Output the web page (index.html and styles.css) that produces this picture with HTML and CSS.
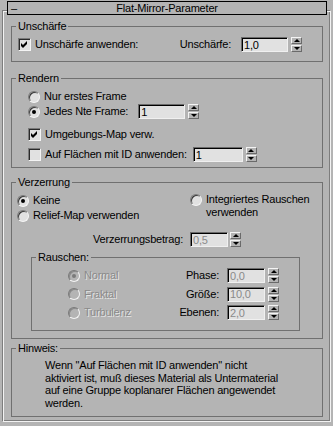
FILE: index.html
```html
<!DOCTYPE html>
<html lang="de">
<head>
    <meta charset="UTF-8">
    <title>Flat-Mirror-Parameter</title>
    <link rel="stylesheet" href="styles.css">
</head>
<body>
    <div class="title">
        <span class="minus">–</span>
        <span class="title-text">Flat-Mirror-Parameter</span>
    </div>

    <div class="frame">
        <fieldset class="group g-blur">
            <legend>Unschärfe</legend>
            <div class="row">
                <span class="box"><svg width="9" height="9" viewBox="0 0 9 9"><polygon points="1,3 3,5 7,1 7,4 3,8 1,6" fill="#000"/></svg></span>
                <span class="txt">Unschärfe anwenden:</span>
                <span class="lbl push">Unschärfe:</span>
                <input class="field w47" value="1,0" readonly>
                <span class="spin"><i class="up"></i><i class="dn"></i></span>
            </div>
        </fieldset>

        <fieldset class="group g-render">
            <legend>Rendern</legend>
            <div class="row ind">
                <span class="radio"></span>
                <span class="txt">Nur erstes Frame</span>
            </div>
            <div class="row ind">
                <span class="radio sel"></span>
                <span class="txt">Jedes Nte Frame:</span>
                <input class="field w47 ml10" value="1" readonly>
                <span class="spin"><i class="up"></i><i class="dn"></i></span>
            </div>
            <div class="row ind r3">
                <span class="box"><svg width="9" height="9" viewBox="0 0 9 9"><polygon points="1,3 3,5 7,1 7,4 3,8 1,6" fill="#000"/></svg></span>
                <span class="txt">Umgebungs-Map verw.</span>
            </div>
            <div class="row ind r4">
                <span class="box"></span>
                <span class="txt">Auf Flächen mit ID anwenden:</span>
                <input class="field w50 ml6" value="1" readonly>
                <span class="spin"><i class="up"></i><i class="dn"></i></span>
            </div>
        </fieldset>

        <fieldset class="group g-warp">
            <legend>Verzerrung</legend>
            <div class="choices">
                <div class="col-left">
                    <div class="row">
                        <span class="radio sel"></span>
                        <span class="txt">Keine</span>
                    </div>
                    <div class="row">
                        <span class="radio"></span>
                        <span class="txt">Relief-Map verwenden</span>
                    </div>
                </div>
                <div class="col-right">
                    <span class="radio"></span>
                    <span class="txt two">Integriertes Rauschen<br>verwenden</span>
                </div>
            </div>
            <div class="row amount">
                <span class="lbl amount-lbl">Verzerrungsbetrag:</span>
                <input class="field w38 ml7" value="0,5" disabled>
                <span class="spin ml2"><i class="up"></i><i class="dn"></i></span>
            </div>

            <fieldset class="group g-noise">
                <legend>Rauschen:</legend>
                <div class="noise-rows">
                    <div class="row">
                        <span class="noise-opt"><span class="radio off sel"></span><span class="txt dim">Normal</span></span>
                        <span class="lbl noise-lbl">Phase:</span>
                        <input class="field w38 ml8" value="0,0" disabled>
                        <span class="spin"><i class="up"></i><i class="dn"></i></span>
                    </div>
                    <div class="row">
                        <span class="noise-opt"><span class="radio off"></span><span class="txt dim">Fraktal</span></span>
                        <span class="lbl noise-lbl">Größe:</span>
                        <input class="field w38 ml8" value="10,0" disabled>
                        <span class="spin"><i class="up"></i><i class="dn"></i></span>
                    </div>
                    <div class="row">
                        <span class="noise-opt"><span class="radio off"></span><span class="txt dim">Turbulenz</span></span>
                        <span class="lbl noise-lbl">Ebenen:</span>
                        <input class="field w38 ml8" value="2,0" disabled>
                        <span class="spin"><i class="up"></i><i class="dn"></i></span>
                    </div>
                </div>
            </fieldset>
        </fieldset>

        <fieldset class="group g-note">
            <legend>Hinweis:</legend>
            <p class="note">Wenn "Auf Flächen mit ID anwenden" nicht<br>aktiviert ist, muß dieses Material als Untermaterial<br>auf eine Gruppe koplanarer Flächen angewendet<br>werden.</p>
        </fieldset>
    </div>
</body>
</html>
```

FILE: styles.css
```css
* { box-sizing: border-box; }
body {
    margin: 0; padding-top: 1px; width: 333px; height: 426px; overflow: hidden;
    background: #b4b4b4; color: #000;
    font: 11px "Liberation Sans", Arial, sans-serif; letter-spacing: -0.2px;
}

/* rollout title */
.title {
    position: relative; z-index: 1;
    margin-left: 7px; width: 320px; height: 14px;
    border: 1px solid #000; background: #b4b4b4;
    display: grid; grid-template-columns: 1fr auto 1fr; line-height: 12px;
}
.minus { padding-left: 3px; }
.title-text { text-align: center; }

.frame {
    margin: -5px 2px 0; padding: 9px 7px 4px 8px;
    border: 1px solid; border-color: #7d7d7d #f2f2f2 #f2f2f2 #7d7d7d;
    box-shadow: inset 1px 1px 0 #f2f2f2, inset -1px -1px 0 #7d7d7d;
}

/* group boxes */
.group { margin: 0; min-width: 0; padding: 4px 0 9px 4px; border: 1px solid #707070; }
.group legend { padding: 0 2px; line-height: 13px; }
.g-render { margin-top: 10px; padding-bottom: 5px; }
.g-warp { margin-top: 8px; padding-bottom: 7px; }
.g-noise { margin: 4px 22px 0 15px; padding-bottom: 10px; }
.g-note { margin-top: 3px; padding-bottom: 6px; }

.row { display: flex; align-items: center; height: 15px; line-height: 15px; white-space: nowrap; }
.g-blur .row { margin: 0 20px 0 2px; }
.ind { margin-left: 12px; }
.r3 { margin-top: 8px; }
.r4 { margin-top: 5px; }
.txt { margin-left: 4px; }
.push { margin-left: auto; margin-right: 10px; }
.dim { color: #8a8a8a; text-shadow: 1px 1px 0 #e4e4e4; }

.choices { display: flex; margin-left: 1px; }
.col-left { width: 173px; }
.col-right { display: flex; align-items: flex-start; }
.col-right .radio { margin-top: 1px; }
.two { line-height: 13px; }
.amount { margin-top: 9px; }
.amount-lbl { width: 167px; text-align: right; }

.noise-rows { display: flex; flex-direction: column; gap: 3.5px; }
.noise-opt { display: flex; align-items: center; width: 124px; padding-left: 32px; }
.noise-lbl { width: 59px; text-align: right; }

.note { margin: 0 0 0 29px; line-height: 12.7px; }

/* controls */
.box {
    flex: none; width: 13px; height: 13px; padding: 1px 0 0 1px;
    border: 1px solid; border-color: #7a7a7a #f4f4f4 #f4f4f4 #7a7a7a;
    box-shadow: inset 1px 1px 0 #2a2a2a; background: #e1e1e1;
}
.box svg { display: block; }
.radio {
    flex: none; width: 12px; height: 12px; border-radius: 50%;
    border: 1px solid; border-color: #7a7a7a #f4f4f4 #f4f4f4 #7a7a7a;
    box-shadow: inset 1px 1px 0 #3a3a3a; background: #e1e1e1;
    display: flex; align-items: center; justify-content: center;
}
.radio.sel::after { content: ''; width: 4px; height: 4px; border-radius: 50%; background: #000; }
.radio.off { background: #b4b4b4; box-shadow: inset 1px 1px 0 #8a8a8a; }
.radio.off.sel::after { background: #7a7a7a; }

.field {
    flex: none; height: 15px; margin: 0; padding: 0 0 0 2px;
    font: inherit; letter-spacing: inherit; line-height: 13px; color: #000; background: #e1e1e1;
    border: 1px solid; border-color: #6a6a6a #f0f0f0 #f0f0f0 #6a6a6a;
    box-shadow: inset 1px 1px 0 #000; outline: none; border-radius: 0;
}
.field:disabled { color: #8a8a8a; background: #e1e1e1; }
.w38 { width: 38px; }
.w47 { width: 47px; }
.w50 { width: 50px; }
.ml6 { margin-left: 6px; }
.ml7 { margin-left: 7px; }
.ml8 { margin-left: 8px; }
.ml10 { margin-left: 10px; }

.spin { flex: none; display: flex; flex-direction: column; gap: 1px; width: 11px; height: 15px; margin-left: 3px; }
.spin.ml2 { margin-left: 2px; }
.spin i {
    flex: 1; display: flex; align-items: center; justify-content: center;
    border: 1px solid; border-color: #f4f4f4 #6a6a6a #6a6a6a #f4f4f4; background: #b4b4b4;
}
.spin i::after { content: ''; border-left: 3px solid transparent; border-right: 3px solid transparent; }
.spin .up::after { border-bottom: 3px solid #000; }
.spin .dn::after { border-top: 3px solid #000; }
```
